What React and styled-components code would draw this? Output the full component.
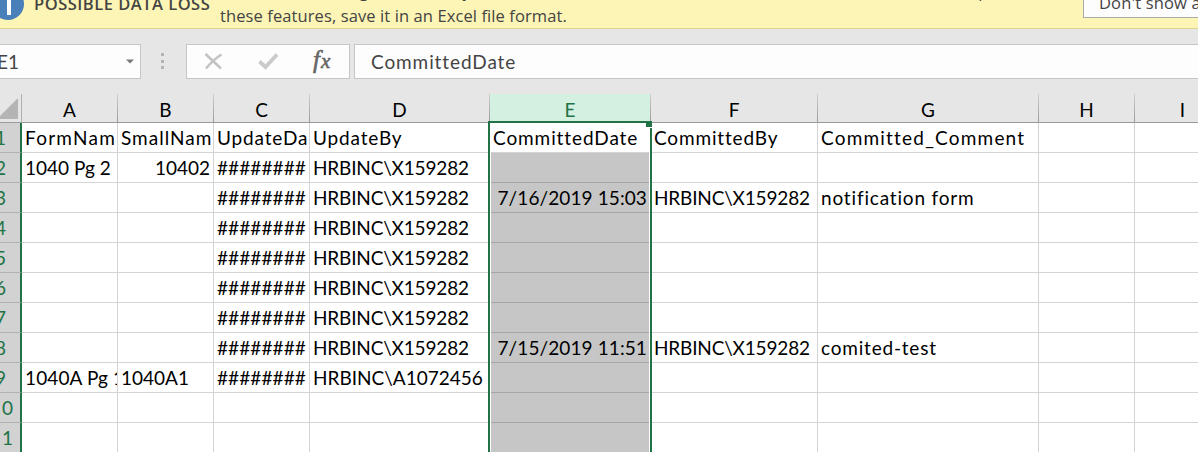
import React from "react";
import styled, { createGlobalStyle } from "styled-components";

const Global = createGlobalStyle`
  body { margin: 0; background: #e6e6e6; overflow: hidden; }
  * { box-sizing: border-box; }
`;

const Window = styled.div`
  width: 1198px;
  height: 452px;
  overflow: hidden;
  display: flex;
  flex-direction: column;
  background: #e6e6e6;
  font-family: Lato, sans-serif;
  font-size: 19px;
  color: #000;
`;

const Notice = styled.div`
  height: 29px;
  flex: none;
  display: flex;
  align-items: flex-end;
  overflow: hidden;
  background: #fcf5b5;
  border-bottom: 1px solid #d9d58c;
  font-family: "Open Sans", sans-serif;
  font-size: 16.5px;
  color: #444;
`;

const InfoIcon = styled.svg`
  flex: none;
  width: 40px;
  height: 40px;
  margin: 0 0 8px -12px;
`;

const NoticeTitle = styled.div`
  flex: none;
  width: 186px;
  margin: 0 0 12px 6px;
  line-height: 24px;
  font-weight: 600;
  white-space: nowrap;
  letter-spacing: 0.5px;
`;

const NoticeText = styled.div`
  flex: none;
  width: 863px;
  line-height: 25px;
  white-space: nowrap;
`;

const NoticeLine = styled.div`
  letter-spacing: ${(p) => p.$spacing}px;
`;

const NoticeButton = styled.div`
  flex: none;
  width: 180px;
  height: 36px;
  margin-bottom: 10px;
  padding: 8px 0 0 15px;
  line-height: 24px;
  letter-spacing: 0.15px;
  border: 1px solid #ababab;
  background: #fdfdfd;
  white-space: nowrap;
`;

const FormulaBar = styled.div`
  flex: none;
  display: flex;
  height: 65px;
  padding: 15px 0 15px;
  color: #444;
`;

const Field = styled.div`
  flex: none;
  display: flex;
  align-items: center;
  height: 35px;
  width: ${(p) => p.$width}px;
  margin-left: ${(p) => p.$gap || 0}px;
  padding-left: ${(p) => p.$pad || 0}px;
  border: 1px solid #c6c6c6;
  background: #fdfdfd;
  letter-spacing: ${(p) => p.$spacing || 0}px;
`;

const NameText = styled.span`
  flex: 1;
`;

const Arrow = styled.svg`
  width: 8px;
  height: 5px;
  margin-right: 6px;
`;

const Grip = styled.div`
  flex: none;
  width: 3px;
  height: 16px;
  margin: 9px 0 0 20px;
  display: flex;
  flex-direction: column;
  justify-content: space-between;
`;

const Dot = styled.i`
  width: 3px;
  height: 3px;
  background: #b4b4b4;
`;

const Sheet = styled.div`
  flex: 1;
  display: grid;
  grid-template-columns: 22px 96px 96px 96px 180px 161px 167px 221px 96px 96px;
  grid-template-rows: 29px repeat(11, 30px);
  position: relative;
`;

const Corner = styled.div`
  border-bottom: 1px solid #9b9b9b;
  border-right: 1px solid #b0b0b0;
`;

const ColumnHead = styled.div`
  text-align: center;
  line-height: 31px;
  border-bottom: 1px solid #9b9b9b;
  border-right: 1px solid;
  border-image: linear-gradient(#cfcfcf, #999) 1;
  color: ${(p) => (p.$active ? "#217346" : "#000")};
  background: ${(p) => (p.$active ? "#d3f0e0" : "#e6e6e6")};
  overflow: hidden;
`;

const RowHead = styled.div`
  display: flex;
  justify-content: flex-end;
  padding-right: ${(p) => p.$pad}px;
  letter-spacing: 2px;
  line-height: 29px;
  color: #217346;
  background: #d2d2d2;
  border-bottom: 1px solid #b2b2b2;
  border-right: 2px solid #217346;
  overflow: hidden;
`;

const Cell = styled.div`
  overflow: hidden;
  white-space: nowrap;
  line-height: 29px;
  padding: 0 3px 0 3px;
  text-align: ${(p) => (p.$right ? "right" : "left")};
  letter-spacing: ${(p) => p.$spacing || 0}px;
  border-right: 1px solid #d4d4d4;
  border-bottom: 1px solid ${(p) => (p.$shaded ? "#a6a6a6" : "#d4d4d4")};
  background: ${(p) => (p.$shaded ? "#c6c6c6" : "#fff")};
`;

const Selection = styled.div`
  position: absolute;
  left: 488px;
  top: 27px;
  width: 164px;
  height: 340px;
  border: 2px solid #217346;
  box-shadow: inset 1px 0 #fff, inset -1px 0 #fff;
`;

const Handle = styled.div`
  position: absolute;
  right: -2px;
  top: -2px;
  width: 6px;
  height: 7px;
  background: #217346;
  border: 1px solid #fff;
  border-width: 0 0 1px 0;
`;

const COLUMNS = ["A", "B", "C", "D", "E", "F", "G", "H", "I"];
const HASH = "########";
const USER = "HRBINC\\X159282";
const ROWS = [
  ["FormNam", "SmallNam", "UpdateDa", "UpdateBy", "CommittedDate", "CommittedBy", "Committed_Comment"],
  ["1040 Pg 2", "10402", HASH, USER],
  ["", "", HASH, USER, "7/16/2019 15:03", USER, "notification form"],
  ["", "", HASH, USER],
  ["", "", HASH, USER],
  ["", "", HASH, USER],
  ["", "", HASH, USER],
  ["", "", HASH, USER, "7/15/2019 11:51", USER, "comited-test"],
  ["1040A Pg 1", "1040A1", HASH, "HRBINC\\A1072456"],
  [],
  [],
];

// Tracking per label, in pixels
const SPACING = {
  FormNam: 1.25,
  SmallNam: 1,
  UpdateDa: 0.85,
  UpdateBy: 0.85,
  CommittedDate: 0.9,
  CommittedBy: 0.85,
  Committed_Comment: 1.2,
  "notification form": 0.83,
  "comited-test": 0.8,
  "7/16/2019 15:03": 0.1,
  "7/15/2019 11:51": 0.1,
  "1040A Pg 1": 0.12,
  [HASH]: 0.1,
  [USER]: -0.17,
};

export default function App() {
  return (
    <Window>
      <Global />
      <Notice>
        <InfoIcon viewBox="0 0 40 40">
          <circle cx="20" cy="24" r="16" fill="#4a80ba" />
          <path d="M19 19h4v16h-4z" fill="#fff" />
        </InfoIcon>
        <NoticeTitle>POSSIBLE DATA LOSS</NoticeTitle>
        <NoticeText>
          <NoticeLine $spacing={0.26}>
            Some features might be lost if you save this workbook in the comma-delimited (.csv) format. To preserve
          </NoticeLine>
          <NoticeLine $spacing={0.1}>these features, save it in an Excel file format.</NoticeLine>
        </NoticeText>
        <NoticeButton>Don't show again</NoticeButton>
      </Notice>
      <FormulaBar>
        <Field $width={145} $gap={-4}>
          <NameText>E1</NameText>
          <Arrow viewBox="0 0 8 5"><path d="M0 .5h8L4 4.5z" fill="#777" /></Arrow>
        </Field>
        <Grip><Dot /><Dot /><Dot /></Grip>
        <Field $width={164} $gap={22}>
          <svg width="162" height="33" viewBox="0 0 162 33">
            <path d="M18.5 9l15.5 14.5M34.5 9.5Q27 14 19 23.5" stroke="#c3c3c3" strokeWidth="2.5" fill="none" />
            <path d="M72.5 16.5l6 5.5L90 9.5" stroke="#cacaca" strokeWidth="3.8" fill="none" />
            <text y="22.5" fontFamily="Liberation Serif, serif" fontStyle="italic" fill="#666" stroke="#666" strokeWidth="0.6" letterSpacing="0">
              <tspan x="126" fontSize="25">f</tspan>
              <tspan x="134" fontSize="21">x</tspan>
            </text>
          </svg>
        </Field>
        <Field $width={860} $gap={4} $pad={16} $spacing={0.9}>CommittedDate</Field>
      </FormulaBar>
      <Sheet>
        <Corner>
          <svg width="20" height="27" viewBox="0 0 20 27"><path d="M18 4v21H-3z" fill="#b4b4b4" /></svg>
        </Corner>
        {COLUMNS.map((c) => (
          <ColumnHead key={c} $active={c === "E"}>{c}</ColumnHead>
        ))}
        {ROWS.map((row, r) => (
          <React.Fragment key={r}>
            <RowHead $pad={r > 8 ? 5 : 12}>{r + 1}</RowHead>
            {COLUMNS.map((c, i) => (
              <Cell
                key={c}
                $right={row[i] === "10402" || (i === 4 && r > 0)}
                $shaded={i === 4 && r > 0}
                $spacing={SPACING[row[i]]}
              >
                {row[i]}
              </Cell>
            ))}
          </React.Fragment>
        ))}
        <Selection><Handle /></Selection>
      </Sheet>
    </Window>
  );
}
